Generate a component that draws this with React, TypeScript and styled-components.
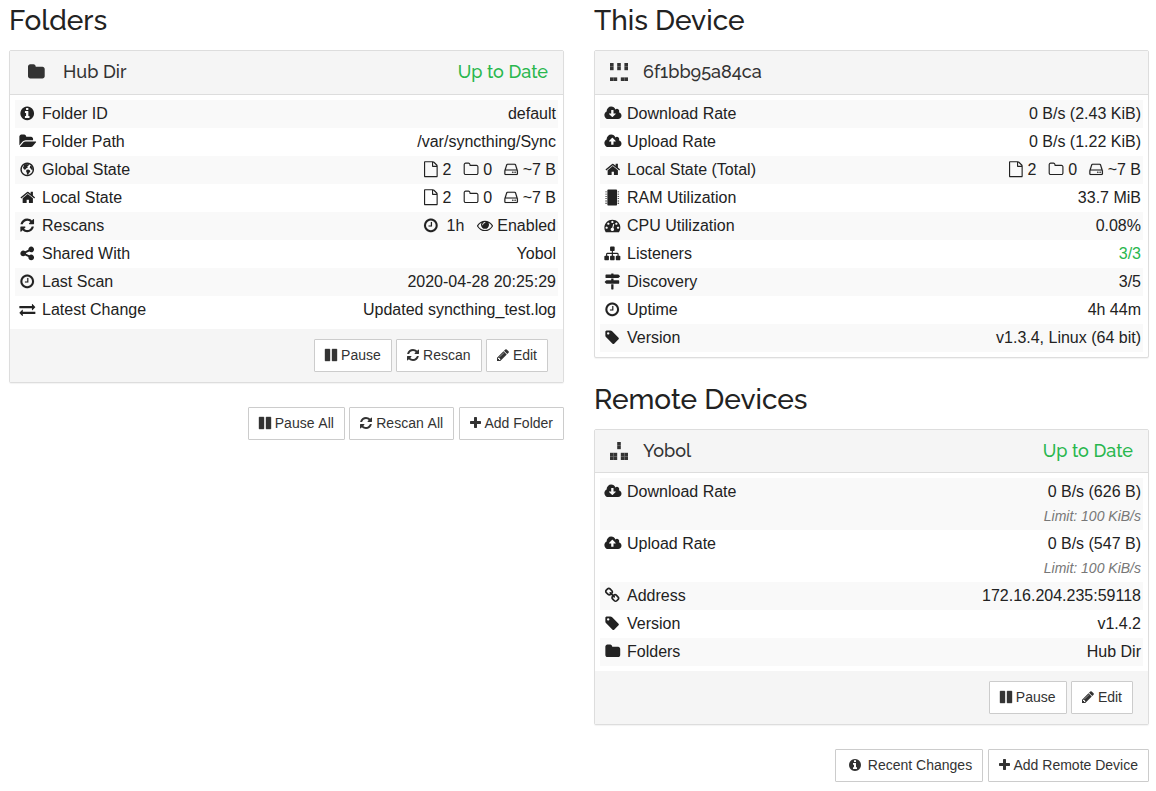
import React from "react";
import styled, { createGlobalStyle } from "styled-components";

const GlobalStyle = createGlobalStyle`
  * { box-sizing: border-box; }
  body {
    margin: 0;
    background: #fff;
    color: #222;
    font-family: "Liberation Sans", Arial, sans-serif;
    font-size: 16px;
  }
`;

type Glyph = { w: number; d: string; x?: number; bold?: number };

const DISC =
  "q0 209-103 385.500t-279.500 279.500-385.500 103-385.500-103-279.500-279.500-103-385.500 103-385.500 279.500-279.500 385.500-103 385.500 103 279.500 279.500 103 385.500z";
const CLOUD =
  "M1856 1152q0 159-112.500 271.500t-271.500 112.500h-1088q-185 0-316.500-131.500t-131.500-316.500q0-130 70-240t188-165q-2-30-2-43 0-212 150-362t362-150q156 0 285.500 87t188.500 231q71-62 166-62 106 0 181 75t75 181q0 76-41 138 130 31 213.500 135.500t83.500 238.500z";

const glyphs: Record<string, Glyph> = {
  info: {
    w: 1536,
    d: "M1152 1376v-160q0-14-9-23t-23-9h-96v-512q0-14-9-23t-23-9h-320q-14 0-23 9t-9 23v160q0 14 9 23t23 9h96v320h-96q-14 0-23 9t-9 23v160q0 14 9 23t23 9h448q14 0 23-9t9-23zm-128-896v-160q0-14-9-23t-23-9h-192q-14 0-23 9t-9 23v160q0 14 9 23t23 9h192q14 0 23-9t9-23zM1664 896" + DISC,
  },
  folder: {
    w: 1664,
    d: "M1728 608v704q0 92-66 158t-158 66h-1216q-92 0-158-66t-66-158v-960q0-92 66-158t158-66h320q92 0 158 66t66 158v32h672q92 0 158 66t66 158z",
  },
  folderOpen: {
    w: 1879,
    x: 64,
    d: "M1943 952q0 31-31 66l-336 396q-43 51-120.500 86.500t-143.500 35.500h-1088q-34 0-60.500-13t-26.500-43q0-31 31-66l336-396q43-51 120.500-86.500t143.500-35.500h1088q34 0 60.500 13t26.500 43zm-343-344v160h-832q-94 0-197 47.500t-164 119.500l-337 396-5 6q0-4-.5-12.500t-.5-12.500v-960q0-92 66-158t158-66h320q92 0 158 66t66 158v32h544q92 0 158 66t66 158z",
  },
  globe: {
    w: 1536,
    d: "M1664 896" + DISC + "M896 290a606 606 0 1 0 0 1212a606 606 0 1 0 0-1212zM560 400l250-90 250 10 30 120-180 100 60 130-170 90-60 110-130 60-90-60-100-150zM820 930l200-20 200 110 20 150-150 130-60 150-150 30-30-220-80-150zM1230 490l110-10 120 240 20 230-110-20-70-130-120-60z",
  },
  home: {
    w: 1664,
    d: "M1472 992v480q0 26-19 45t-45 19h-384v-384h-256v384h-384q-26 0-45-19t-19-45v-480q0-1 .5-3t.5-3l575-474 575 474q1 2 1 6zm223-69l-62 74q-8 9-21 11h-3q-13 0-21-7l-692-577-692 577q-12 8-24 7-13-2-21-11l-62-74q-8-10-7-23.500t11-21.500l719-599q32-26 76-26t76 26l244 204v-195q0-14 9-23t23-9h192q14 0 23 9t9 23v408l219 182q10 8 11 21.500t-7 23.500z",
  },
  refresh: {
    w: 1536,
    d: "M1639 1056q0 5-1 7-64 268-268 434.500t-478 166.500q-146 0-282.500-55t-243.500-157l-129 129q-19 19-45 19t-45-19-19-45v-448q0-26 19-45t45-19h448q26 0 45 19t19 45-19 45l-137 137q71 66 161 102t187 36q134 0 250-65t186-179q11-17 53-117 8-23 30-23h192q13 0 22.500 9.500t9.500 22.500zm25-800v448q0 26-19 45t-45 19h-448q-26 0-45-19t-19-45 19-45l138-138q-148-137-349-137-134 0-250 65t-186 179q-11 17-53 117-8 23-30 23h-199q-13 0-22.500-9.500t-9.500-22.500v-7q65-268 270-434.500t480-166.500q146 0 284 55.500t245 156.500l130-129q19-19 45-19t45 19 19 45z",
  },
  share: {
    w: 1536,
    d: "M1344 1024q133 0 226.500 93.500t93.500 226.500-93.500 226.500-226.500 93.500-226.500-93.500-93.500-226.500q0-12 2-34l-360-180q-92 86-218 86-133 0-226.500-93.500t-93.500-226.500 93.500-226.500 226.500-93.500q126 0 218 86l360-180q-2-22-2-34 0-133 93.500-226.500t226.500-93.500 226.500 93.500 93.500 226.500-93.500 226.500-226.500 93.500q-126 0-218-86l-360 180q2 22 2 34t-2 34l360 180q92-86 218-86z",
  },
  clock: {
    w: 1536,
    bold: 12,
    d: "M1024 544v448q0 14-9 23t-23 9h-320q-14 0-23-9t-9-23v-64q0-14 9-23t23-9h224v-352q0-14 9-23t23-9h64q14 0 23 9t9 23zm416 352q0-148-73-273t-198-198-273-73-273 73-198 198-73 273 73 273 198 198 273 73 273-73 198-198 73-273zM1664 896" + DISC,
  },
  exchange: {
    w: 1792,
    d: "M1792 1184v192q0 13-9.500 22.500t-22.500 9.500h-1376v192q0 13-9.500 22.500t-22.500 9.500q-12 0-24-10l-319-320q-9-9-9-22 0-14 9-23l320-320q9-9 23-9 13 0 22.500 9.500t9.500 22.500v192h1376q13 0 22.500 9.500t9.500 22.500zm0-544q0 14-9 23l-320 320q-9 9-23 9-13 0-22.500-9.500t-9.500-22.500v-192h-1376q-13 0-22.500-9.500t-9.500-22.500v-192q0-13 9.500-22.500t22.500-9.500h1376v-192q0-14 9-23t23-9q12 0 24 10l319 319q9 9 9 23z",
  },
  download: {
    w: 1920,
    d: CLOUD + "M1216 928q0-14-9-23t-23-9h-224v-352q0-13-9.500-22.500t-22.500-9.500h-192q-13 0-22.500 9.500t-9.500 22.500v352h-224q-13 0-22.500 9.500t-9.500 22.500q0 14 9 23l352 352q9 9 23 9t23-9l351-351q10-12 10-24z",
  },
  upload: {
    w: 1920,
    d: CLOUD + "M1216 864q0-14-9-23l-352-352q-9-9-23-9t-23 9l-351 351q-10 12-10 24 0 14 9 23t23 9h224v352q0 13 9.500 22.500t22.500 9.500h192q13 0 22.500-9.500t9.500-22.500v-352h224q13 0 22.500-9.500t9.500-22.500z",
  },
  chip: {
    w: 1536,
    d: "M448 0h896q40 0 68 28t28 68v1600q0 40-28 68t-68 28h-896q-40 0-68-28t-28-68v-1600q0-40 28-68t68-28zM128 224h160v96h-160zM128 480h160v96h-160zM128 736h160v96h-160zM128 992h160v96h-160zM128 1248h160v96h-160zM128 1504h160v96h-160zM1504 224h160v96h-160zM1504 480h160v96h-160zM1504 736h160v96h-160zM1504 992h160v96h-160zM1504 1248h160v96h-160zM1504 1504h160v96h-160z",
  },
  gauge: {
    w: 1792,
    d: "M384 1152q0-53-37.500-90.500t-90.500-37.500-90.500 37.500-37.500 90.500 37.500 90.500 90.500 37.500 90.500-37.500 37.500-90.500zm192-448q0-53-37.500-90.500t-90.500-37.500-90.500 37.500-37.500 90.500 37.500 90.500 90.500 37.500 90.500-37.500 37.500-90.500zm428 481l101-382q6-26-7.500-48.500t-38.500-29.500-48 6.500-30 39.500l-101 382q-60 5-107 43.500t-63 98.500q-20 77 20 146t117 89 146-20 89-117q16-60-6-117t-72-91zm660-33q0-53-37.500-90.500t-90.500-37.500-90.500 37.500-37.500 90.500 37.500 90.500 90.500 37.500 90.500-37.500 37.500-90.500zm-640-640q0-53-37.500-90.500t-90.500-37.500-90.500 37.500-37.500 90.500 37.500 90.500 90.500 37.500 90.500-37.500 37.500-90.500zm448 192q0-53-37.500-90.500t-90.500-37.500-90.500 37.500-37.500 90.500 37.500 90.500 90.500 37.500 90.500-37.500 37.500-90.500zm320 448q0 261-141 483-19 29-54 29h-1402q-35 0-54-29-141-221-141-483 0-182 71-348t191-286 286-191 348-71 348 71 286 191 191 286 71 348z",
  },
  sitemap: {
    w: 1792,
    d: "M1792 1248v320q0 40-28 68t-68 28h-320q-40 0-68-28t-28-68v-320q0-40 28-68t68-28h96v-192h-512v192h96q40 0 68 28t28 68v320q0 40-28 68t-68 28h-320q-40 0-68-28t-28-68v-320q0-40 28-68t68-28h96v-192h-512v192h96q40 0 68 28t28 68v320q0 40-28 68t-68 28h-320q-40 0-68-28t-28-68v-320q0-40 28-68t68-28h96v-192q0-52 38-90t90-38h512v-192h-96q-40 0-68-28t-28-68v-320q0-40 28-68t68-28h320q40 0 68 28t28 68v320q0 40-28 68t-68 28h-96v192h512q52 0 90 38t38 90v192h96q40 0 68 28t28 68z",
  },
  signs: {
    w: 1792,
    d: "M1745 297q10 10 10 23t-10 23l-141 141q-28 28-68 28h-1344q-26 0-45-19t-19-45v-256q0-26 19-45t45-19h576v-64q0-26 19-45t45-19h128q26 0 45 19t19 45v64h512q40 0 68 28zm-977 919h256v512q0 26-19 45t-45 19h-128q-26 0-45-19t-19-45v-512zm832-448q26 0 45 19t19 45v256q0 26-19 45t-45 19h-1344q-40 0-68-28l-141-141q-10-10-10-23t10-23l141-141q28-28 68-28h512v-192h256v192h576z",
  },
  tag: {
    w: 1536,
    d: "M576 448q0-53-37.500-90.500t-90.500-37.500-90.500 37.500-37.500 90.500 37.500 90.500 90.500 37.500 90.500-37.500 37.500-90.500zm1067 576q0 53-37 90l-491 492q-39 37-91 37-53 0-90-37l-715-716q-38-37-64.500-101t-26.500-117v-416q0-52 38-90t90-38h416q53 0 117 26.500t102 64.500l715 714q37 39 37 91z",
  },
  link: {
    w: 1664,
    d: "M1456 1216q0-40-28-68l-208-208q-28-28-68-28-42 0-72 32 3 3 19 18.500t21.500 21.500 15 19 13 25.500 3.500 27.500q0 40-28 68t-68 28q-15 0-27.500-3.500t-25.500-13-19-15-21.500-21.500-18.500-19q-33 31-33 73 0 40 28 68l206 207q27 27 68 27 40 0 68-26l147-146q28-28 28-67zm-703-705q0-40-28-68l-206-207q-28-28-68-28-39 0-68 27l-147 146q-28 28-28 67 0 40 28 68l208 208q27 27 68 27 42 0 72-31-3-3-19-18.500t-21.500-21.500-15-19-13-25.500-3.500-27.500q0-40 28-68t68-28q15 0 27.500 3.500t25.500 13 19 15 21.500 21.500 18.500 19q33-31 33-73zm895 705q0 120-85 203l-147 146q-83 83-203 83-121 0-204-85l-206-207q-83-83-83-203 0-123 88-209l-88-88q-86 88-208 88-120 0-204-84l-208-208q-84-84-84-204t85-203l147-146q83-83 203-83 121 0 204 85l206 207q83 83 83 203 0 123-88 209l88 88q86-88 208-88 120 0 204 84l208 208q84 84 84 204z",
  },
  pause: {
    w: 1536,
    bold: 50,
    d: "M1664 192v1408q0 26-19 45t-45 19h-512q-26 0-45-19t-19-45v-1408q0-26 19-45t45-19h512q26 0 45 19t19 45zm-896 0v1408q0 26-19 45t-45 19h-512q-26 0-45-19t-19-45v-1408q0-26 19-45t45-19h512q26 0 45 19t19 45z",
  },
  plus: {
    w: 1408,
    d: "M1600 736v192q0 40-28 68t-68 28h-416v416q0 40-28 68t-68 28h-192q-40 0-68-28t-28-68v-416h-416q-40 0-68-28t-28-68v-192q0-40 28-68t68-28h416v-416q0-40 28-68t68-28h192q40 0 68 28t28 68v416h416q40 0 68 28t28 68z",
  },
  pencil: {
    w: 1536,
    d: "M491 1536l91-91-235-235-91 91v107h128v128h107zm523-928q0-22-22-22-10 0-17 7l-542 542q-7 7-7 17 0 22 22 22 10 0 17-7l542-542q7-7 7-17zm-54-192l416 416-832 832h-416v-416zm683 96q0 53-37 90l-166 166-416-416 166-165q36-38 90-38 53 0 91 38l235 234q37 39 37 91z",
  },
  eye: {
    w: 1792,
    d: "M1664 960q-152-236-381-353 61 104 61 225 0 185-131.500 316.500t-316.500 131.500-316.500-131.500-131.500-316.500q0-121 61-225-229 117-381 353 133 205 333.500 326.500t434.500 121.500 434.500-121.500 333.500-326.500zm-720-384q0-20-14-34t-34-14q-125 0-214.500 89.500t-89.500 214.500q0 20 14 34t34 14 34-14 14-34q0-86 61-147t147-61q20 0 34-14t14-34zm848 384q0 34-20 69-140 230-376.500 368.500t-499.500 138.500-499.500-139-376.500-368q-20-35-20-69t20-69q140-229 376.500-368t499.500-139 499.500 139 376.500 368q20 35 20 69z",
  },
  fileO: {
    w: 1536,
    d: "M1596 380q28 28 48 76t20 88v1152q0 40-28 68t-68 28h-1344q-40 0-68-28t-28-68v-1600q0-40 28-68t68-28h896q40 0 88 20t76 48zm-444-244v376h376q-10-29-22-41l-313-313q-12-12-41-22zm384 1528v-1024h-416q-40 0-68-28t-28-68v-416h-768v1536h1280z",
  },
  folderO: {
    w: 1664,
    d: "M1600 1312v-704q0-40-28-68t-68-28h-704q-40 0-68-28t-28-68v-64q0-40-28-68t-68-28h-320q-40 0-68 28t-28 68v960q0 40 28 68t68 28h1216q40 0 68-28t28-68zm128-704v704q0 92-66 158t-158 66h-1216q-92 0-158-66t-66-158v-960q0-92 66-158t158-66h320q92 0 158 66t66 158v32h672q92 0 158 66t66 158z",
  },
  disk: {
    w: 1536,
    bold: 12,
    d: "M1168 1216q0 33-23.500 56.500t-56.500 23.500-56.500-23.500-23.500-56.500 23.500-56.500 56.500-23.500 56.500 23.500 23.500 56.500zm256 0q0 33-23.500 56.500t-56.500 23.500-56.500-23.500-23.500-56.500 23.500-56.500 56.500-23.500 56.500 23.500 23.500 56.500zm112 160v-320q0-13-9.500-22.500t-22.500-9.500h-1216q-13 0-22.500 9.500t-9.500 22.500v320q0 13 9.500 22.500t22.500 9.500h1216q13 0 22.500-9.500t9.500-22.500zm-1230-480h1180l-157-482q-4-13-16-21.500t-26-8.500h-782q-14 0-26 8.500t-16 21.500zm1358 160v320q0 66-47 113t-113 47h-1216q-66 0-113-47t-47-113v-320q0-25 16-75l197-606q17-53 63-86t101-33h782q55 0 101 33t63 86l197 606q16 50 16 75z",
  },
};

const GlyphSvg = styled.svg<{ $em: number }>`
  display: inline-block;
  width: ${(p) => p.$em}em;
  height: 1em;
  vertical-align: -0.1429em;
  fill: currentColor;
  stroke: currentColor;
  overflow: visible;
`;

const FixedSlot = styled.span`
  display: inline-block;
  width: 1.2857em;
  text-align: center;
`;

/* dx and dy move the glyph inside its box, in font units (1792 to the em). */
function Icon({ name, fixed, dx = 0, dy = 0 }: { name: string; fixed?: boolean; dx?: number; dy?: number }) {
  const g = glyphs[name];
  const x = g.x ?? (1792 - g.w) / 2;
  const svg = (
    <GlyphSvg $em={g.w / 1792} viewBox={`${x - dx} ${-dy} ${g.w} 1792`} strokeWidth={g.bold ?? 0} aria-hidden="true">
      <path fillRule="evenodd" d={g.d} />
    </GlyphSvg>
  );
  return fixed ? <FixedSlot>{svg}</FixedSlot> : svg;
}

/* Each word is its own box, so no kerning is applied across a space. */
const Word = styled.span`
  display: inline-block;
`;

function Words({ text }: { text: string }) {
  return (
    <>
      {text.split(" ").map((word, i) => (
        <React.Fragment key={i}>
          {i > 0 && " "}
          <Word>{word}</Word>
        </React.Fragment>
      ))}
    </>
  );
}

const Page = styled.main`
  display: grid;
  grid-template-columns: 555px 555px;
  column-gap: 30px;
  align-items: start;
  width: 1156px;
  padding-left: 9px;
`;

const Column = styled.section`
  display: flex;
  flex-direction: column;
`;

const Heading = styled.h3<{ $spaced?: boolean }>`
  height: 50px;
  margin: ${(p) => (p.$spaced ? 21 : 0)}px 0 0;
  font: 500 28px/42px Raleway, Lato, sans-serif;
  white-space: nowrap;
`;

const Panel = styled.div`
  border: 1px solid #ddd;
  border-radius: 2px;
  background: #fff;
  box-shadow: 0 1px 1px rgba(0, 0, 0, 0.05);
`;

const PanelHeader = styled.div<{ $height: number }>`
  display: flex;
  align-items: flex-start;
  height: ${(p) => p.$height}px;
  padding: 0 15px;
  border-bottom: 1px solid #ddd;
  background: #f5f5f5;
  color: #333;
  font: 500 18px/42px Raleway, Lato, sans-serif;
`;

const DeviceIcon = styled.span`
  flex: none;
  width: 33px;
  padding-top: 12px;
`;

const FolderIcon = styled.span`
  flex: none;
  width: 38px;
  padding-left: 3px;
`;

const PanelTitle = styled.span`
  flex: 1;
`;

const Status = styled.span`
  color: #29b74e;
`;

const Rows = styled.div`
  padding: 5px;
`;

const Row = styled.div`
  display: flex;
  justify-content: space-between;
  padding: 0 2px;
  line-height: 28px;
  white-space: nowrap;
  &:nth-child(odd) {
    background: #f9f9f9;
  }
`;

const Value = styled.div<{ $good?: boolean }>`
  text-align: right;
  color: ${(p) => (p.$good ? "#29b74e" : "inherit")};
`;

const Limit = styled.div`
  height: 24px;
  color: #777;
  font-size: 14px;
  font-style: italic;
  line-height: 21px;
`;

const Stats = styled.div`
  display: flex;
  gap: 12.45px;
`;

const PanelFooter = styled.div`
  display: flex;
  justify-content: flex-end;
  gap: 4.45px;
  height: 53px;
  padding: 10px 15px;
  background: #f5f5f5;
`;

const Actions = styled.div`
  display: flex;
  justify-content: flex-end;
  gap: 4.45px;
  margin-top: 24px;
`;

const ButtonBox = styled.button`
  height: 33px;
  padding: 0 10px;
  border: 1px solid #ccc;
  border-radius: 1px;
  background: #fff;
  color: #333;
  font: 14px/31px "Liberation Sans", Arial, sans-serif;
  white-space: nowrap;
`;

function Button({ icon, label, fixed }: { icon: string; label: string; fixed?: boolean }) {
  return (
    <ButtonBox type="button">
      <Icon name={icon} fixed={fixed} /> <Words text={label} />
    </ButtonBox>
  );
}

function Item({ icon, label, good, children }: { icon: string; label: string; good?: boolean; children: React.ReactNode }) {
  return (
    <Row>
      <div>
        <Icon name={icon} fixed dx={40} dy={45} /> <Words text={label} />
      </div>
      <Value $good={good}>{children}</Value>
    </Row>
  );
}

function StateStats() {
  return (
    <Stats>
      <span><Icon name="fileO" dy={25} /> 2</span>
      <span><Icon name="folderO" dx={-40} dy={45} /> 0</span>
      <span><Icon name="disk" dx={30} dy={45} /> ~7 B</span>
    </Stats>
  );
}

const IdenticonSvg = styled.svg`
  display: block;
  width: 18px;
  height: 18px;
  fill: #333;
`;

function Identicon({ rows }: { rows: string[] }) {
  return (
    <IdenticonSvg viewBox="0 0 18 18" aria-hidden="true">
      {rows.flatMap((row, y) =>
        [...row].map((c, x) =>
          c === "#" ? <rect key={`${x}-${y}`} x={x * 3.6} y={y * 3.6} width={3.6} height={3.6} /> : null
        )
      )}
    </IdenticonSvg>
  );
}

export default function App() {
  return (
    <>
      <GlobalStyle />
      <Page>
        <Column>
          <Heading>Folders</Heading>
          <Panel>
            <PanelHeader $height={44}>
              <FolderIcon><Icon name="folder" /></FolderIcon>
              <PanelTitle>Hub Dir</PanelTitle>
              <Status>Up to Date</Status>
            </PanelHeader>
            <Rows>
              <Item icon="info" label="Folder ID">default</Item>
              <Item icon="folderOpen" label="Folder Path">/var/syncthing/Sync</Item>
              <Item icon="globe" label="Global State"><StateStats /></Item>
              <Item icon="home" label="Local State"><StateStats /></Item>
              <Item icon="refresh" label="Rescans">
                <Stats>
                  <span><Icon name="clock" dy={45} />&nbsp; 1h</span>
                  <span><Icon name="eye" dy={45} /> Enabled</span>
                </Stats>
              </Item>
              <Item icon="share" label="Shared With">Yobol</Item>
              <Item icon="clock" label="Last Scan">2020-04-28 20:25:29</Item>
              <Item icon="exchange" label="Latest Change">Updated syncthing_test.log</Item>
            </Rows>
            <PanelFooter>
              <Button icon="pause" label="Pause" />
              <Button icon="refresh" label="Rescan" />
              <Button icon="pencil" label="Edit" />
            </PanelFooter>
          </Panel>
          <Actions>
            <Button icon="pause" label="Pause All" />
            <Button icon="refresh" label="Rescan All" />
            <Button icon="plus" label="Add Folder" />
          </Actions>
        </Column>

        <Column>
          <Heading>This Device</Heading>
          <Panel>
            <PanelHeader $height={44}>
              <DeviceIcon><Identicon rows={["#.#.#", "#.#.#", ".....", ".....", "##.##"]} /></DeviceIcon>
              <PanelTitle>6f1bb95a84ca</PanelTitle>
            </PanelHeader>
            <Rows>
              <Item icon="download" label="Download Rate">0 B/s (2.43 KiB)</Item>
              <Item icon="upload" label="Upload Rate">0 B/s (1.22 KiB)</Item>
              <Item icon="home" label="Local State (Total)"><StateStats /></Item>
              <Item icon="chip" label="RAM Utilization">33.7 MiB</Item>
              <Item icon="gauge" label="CPU Utilization">0.08%</Item>
              <Item icon="sitemap" label="Listeners" good>3/3</Item>
              <Item icon="signs" label="Discovery">3/5</Item>
              <Item icon="clock" label="Uptime">4h 44m</Item>
              <Item icon="tag" label="Version">v1.3.4, Linux (64 bit)</Item>
            </Rows>
          </Panel>

          <Heading $spaced>Remote Devices</Heading>
          <Panel>
            <PanelHeader $height={43}>
              <DeviceIcon><Identicon rows={["..#..", "..#..", ".....", "##.##", "##.##"]} /></DeviceIcon>
              <PanelTitle>Yobol</PanelTitle>
              <Status>Up to Date</Status>
            </PanelHeader>
            <Rows>
              <Item icon="download" label="Download Rate">
                0 B/s (626 B)
                <Limit>Limit: 100 KiB/s</Limit>
              </Item>
              <Item icon="upload" label="Upload Rate">
                0 B/s (547 B)
                <Limit>Limit: 100 KiB/s</Limit>
              </Item>
              <Item icon="link" label="Address">172.16.204.235:59118</Item>
              <Item icon="tag" label="Version">v1.4.2</Item>
              <Item icon="folder" label="Folders">Hub Dir</Item>
            </Rows>
            <PanelFooter>
              <Button icon="pause" label="Pause" />
              <Button icon="pencil" label="Edit" />
            </PanelFooter>
          </Panel>
          <Actions>
            <Button icon="info" label="Recent Changes" fixed />
            <Button icon="plus" label="Add Remote Device" />
          </Actions>
        </Column>
      </Page>
    </>
  );
}
